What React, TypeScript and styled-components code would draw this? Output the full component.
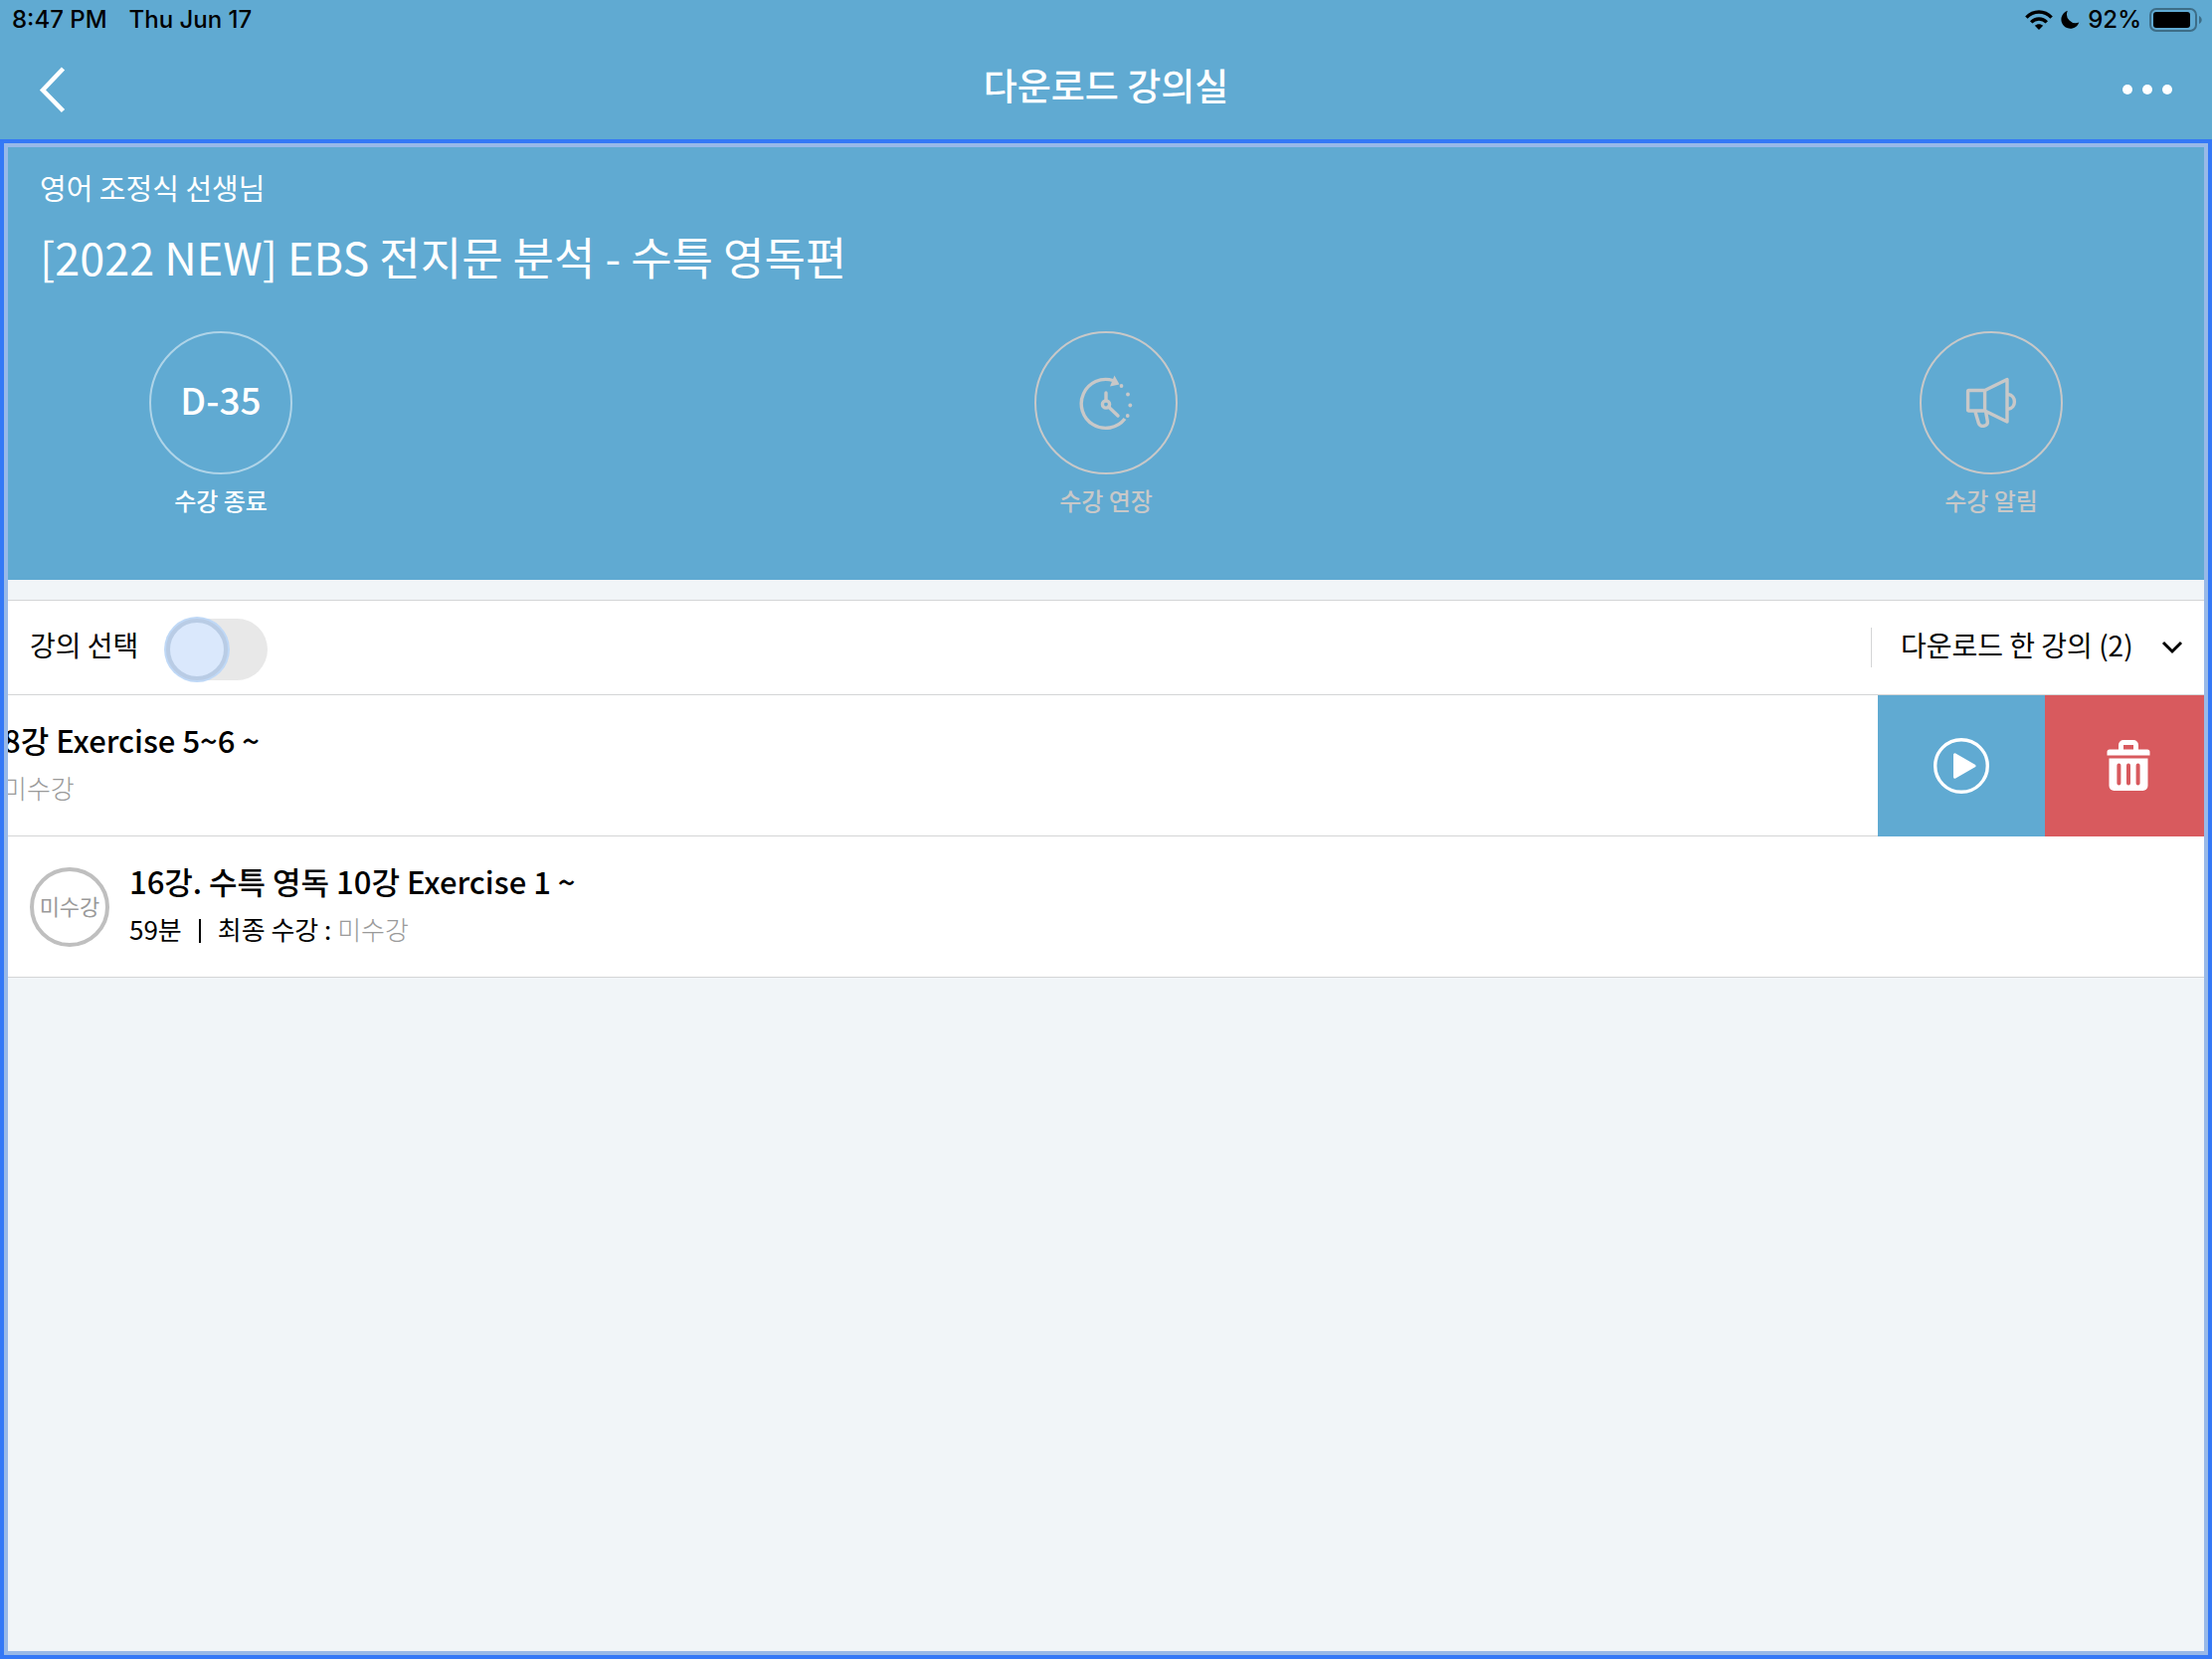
import React from 'react';
import styled, { createGlobalStyle } from 'styled-components';

const color = {
  sky: '#60aad2',
  focus: '#3478f6',
  focusSoft: '#98b9e8',
  page: '#f1f5f8',
  line: '#d4d5d6',
  muted: '#c8c8c8',
  grey: '#9a9a9a',
  danger: '#d85a5e',
};

const GlobalStyle = createGlobalStyle`
  *, *::before, *::after { box-sizing: border-box; }
  body {
    margin: 0;
    background: ${color.page};
    color: #000;
    font-family: "Noto Sans CJK KR", "Noto Sans", sans-serif;
  }
  button, select, input { font: inherit; color: inherit; margin: 0; }
  button { border: 0; padding: 0; background: none; cursor: pointer; }
  h1, h2, h3, p, ul { margin: 0; padding: 0; font-weight: 400; }
`;

const Page = styled.div`
  display: flex;
  flex-direction: column;
  min-height: 100vh;
`;

const TopArea = styled.header`
  background: ${color.sky};
`;

const StatusBar = styled.div`
  display: flex;
  justify-content: space-between;
  height: 40px;
  padding: 0 10px 0 12px;
  font: 500 24px/40px Inter, "Liberation Sans", sans-serif;
`;

const StatusGroup = styled.div<{ $gap: number }>`
  display: flex;
  align-items: center;
  gap: ${(p) => p.$gap}px;
`;

const NavBar = styled.nav`
  display: grid;
  grid-template-columns: 100px 1fr 100px;
  align-items: center;
  height: 100px;
  padding: 0 30px;
`;

const NavTitle = styled.h1`
  color: #fff;
  font-size: 37px;
  font-weight: 500;
  line-height: 52px;
  padding-bottom: 10px;
  text-align: center;
`;

const NavButton = styled.button<{ $end?: boolean }>`
  display: flex;
  align-items: center;
  justify-content: ${(p) => (p.$end ? 'flex-end' : 'flex-start')};
  height: 80px;
  padding: 0 10px;
`;

const FocusFrame = styled.main`
  flex: 1;
  display: flex;
  flex-direction: column;
  border: 4px solid ${color.focus};
`;

const FocusInner = styled.div`
  flex: 1;
  border: 4px solid ${color.focusSoft};
`;

const Hero = styled.section`
  padding: 16px 32px 62px;
  margin-bottom: 20px;
  background: ${color.sky};
  color: #fff;
`;

const Teacher = styled.p`
  font-size: 29px;
  line-height: 48px;
`;

const CourseTitle = styled.h2`
  margin-top: 12px;
  font-size: 45px;
  line-height: 68px;
`;

const Actions = styled.div`
  display: flex;
  justify-content: space-between;
  margin-top: 41px;
  padding: 0 110px;
`;

const Action = styled.button<{ $muted?: boolean }>`
  display: flex;
  flex-direction: column;
  align-items: center;
  gap: 8px;
  width: 144px;
  color: ${(p) => (p.$muted ? color.muted : '#fff')};
  font-size: 24px;
  font-weight: 500;
  line-height: 36px;
`;

const Ring = styled.span<{ $muted?: boolean }>`
  display: flex;
  align-items: center;
  justify-content: center;
  width: 144px;
  height: 144px;
  border: 2px solid ${(p) => (p.$muted ? color.muted : '#afd4e8')};
  border-radius: 50%;
`;

const DaysLeft = styled.span`
  padding-bottom: 8px;
  font-size: 37px;
  line-height: 52px;
`;

const Toolbar = styled.div`
  display: flex;
  align-items: center;
  justify-content: space-between;
  height: 96px;
  padding: 0 20px;
  background: #fff;
  border: solid ${color.line};
  border-width: 1px 0;
`;

const ToggleLabel = styled.label`
  display: flex;
  align-items: center;
  gap: 28px;
  padding-left: 2px;
  font-size: 28px;
  line-height: 48px;
`;

const LabelText = styled.span`
  padding-bottom: 6px;
`;

const Toggle = styled.input`
  appearance: none;
  display: flex;
  align-items: center;
  width: 102px;
  height: 62px;
  border-radius: 31px;
  background: #e8e8e8;
  cursor: pointer;

  &::before {
    content: '';
    width: 62px;
    height: 62px;
    flex: none;
    border: 4px solid #b9cce5;
    border-radius: 50%;
    background: #dae8fc;
    box-shadow: 0 0 0 2px #bfd8f6;
  }
  &:checked {
    justify-content: flex-end;
  }
`;

const ToggleSlot = styled.span`
  display: flex;
  padding-top: 4px;
`;

const FilterBox = styled.div`
  display: grid;
  grid-template-rows: 40px;
  align-items: center;
  border-left: 1px solid ${color.line};
`;

const Filter = styled.select`
  grid-area: 1 / 1;
  appearance: none;
  width: 314px;
  height: 40px;
  padding: 0 0 6px 29px;
  border: 0;
  background: none;
  font-size: 28px;
  line-height: 34px;
`;

const FilterArrow = styled.svg`
  grid-area: 1 / 1;
  justify-self: end;
  margin-right: 1px;
  pointer-events: none;
`;

const Lessons = styled.ul`
  list-style: none;
`;

const LessonRow = styled.li`
  display: flex;
  height: 142px;
  overflow: hidden;
  background: #fff;
`;

const LessonBody = styled.div<{ $swiped?: boolean }>`
  flex: 1;
  display: flex;
  align-items: center;
  gap: 20px;
  min-width: 0;
  margin-left: ${(p) => (p.$swiped ? -5 : 0)}px;
  padding: 0 22px 4px ${(p) => (p.$swiped ? 0 : 22)}px;
  border-bottom: 1px solid ${color.line};
  white-space: nowrap;
`;

const Badge = styled.span`
  display: flex;
  flex: none;
  align-items: center;
  justify-content: center;
  width: 80px;
  height: 80px;
  margin-top: 4px;
  padding-bottom: 4px;
  border: 4px solid #bfbfbf;
  border-radius: 50%;
  color: ${color.grey};
  font-size: 22px;
  line-height: 32px;
`;

const LessonTitle = styled.h3`
  font-size: 31px;
  font-weight: 500;
  line-height: 48px;
`;

const Meta = styled.p`
  font-size: 26px;
  line-height: 48px;
`;

const Bar = styled.span`
  display: inline-block;
  width: 2px;
  height: 24px;
  margin: 0 17px;
  background: #000;
  vertical-align: -3px;
`;

const Muted = styled.span`
  color: ${color.grey};
  font-weight: 300;
`;

const RowButton = styled.button<{ $danger?: boolean }>`
  display: flex;
  flex: none;
  align-items: center;
  justify-content: center;
  width: ${(p) => (p.$danger ? 160 : 168)}px;
  padding-left: ${(p) => (p.$danger ? 8 : 0)}px;
  background: ${(p) => (p.$danger ? color.danger : color.sky)};
`;

const WifiIcon = () => (
  <svg width="28" height="20" viewBox="0 0 28 20" aria-hidden="true">
    <g fill="none" stroke="#000" strokeWidth="3.4">
      <path d="M1.4 7.6C8.4 .2 19.6 .2 26.6 7.6" />
      <path d="M6.2 12.4c4.4-4.5 11.2-4.5 15.6 0" />
    </g>
    <path d="M14 20l-4.2-4.2c2.3-2.2 6.1-2.2 8.4 0z" />
  </svg>
);

const MoonIcon = () => (
  <svg width="19" height="20" viewBox="0 0 19 20" aria-hidden="true">
    <path d="M6.8.8A9.2 9.2 0 1 0 18.3 12.6 8.9 8.9 0 0 1 6.8.8z" />
  </svg>
);

const BatteryIcon = () => (
  <svg width="53" height="24" viewBox="0 0 53 24" aria-hidden="true">
    <rect x="1" y="1" width="46" height="22" rx="6" fill="none" stroke="#3d6d87" strokeWidth="2" />
    <rect x="4" y="4" width="37" height="16" rx="3" />
    <path d="M50 8c3.6 1.4 3.6 6.6 0 8z" fill="#3d6d87" />
  </svg>
);

const BackIcon = () => (
  <svg width="26" height="48" viewBox="0 0 26 48" fill="none" stroke="#fff" strokeWidth="4.5" aria-hidden="true">
    <path d="M23.5 3L3 24.5L23.5 45.5" />
  </svg>
);

const MoreIcon = () => (
  <svg width="50" height="10" viewBox="0 0 50 10" fill="#fff" aria-hidden="true">
    <circle cx="5" cy="5" r="5" />
    <circle cx="25" cy="5" r="5" />
    <circle cx="45" cy="5" r="5" />
  </svg>
);

const ClockIcon = () => (
  <svg width="54" height="58" viewBox="0 0 54 58" fill="none" stroke="currentColor" strokeWidth="3.4" aria-hidden="true">
    <path d="M46 45A24.5 24.5 0 1 1 34 6.5" />
    <path d="M35.500 1.5L40.500 10.500L31 12.500Z" fill="currentColor" stroke="none" />
    <circle cx="27" cy="30.500" r="3.600" />
    <path d="M27 27v-8M29.500 33l9.500 9" strokeLinecap="round" />
    <g fill="currentColor" stroke="none">
      <circle cx="42.500" cy="12" r="1.900" />
      <circle cx="49" cy="20.500" r="1.900" />
      <circle cx="51.300" cy="31.500" r="1.900" />
      <circle cx="48.700" cy="42" r="1.900" />
    </g>
  </svg>
);

const MegaphoneIcon = () => (
  <svg width="52" height="54" viewBox="0 0 52 54" fill="none" stroke="currentColor" strokeWidth="3.4" strokeLinejoin="round" aria-hidden="true">
    <rect x="2.600" y="14.500" width="17" height="20.500" rx="1" />
    <path d="M19.600 14.500L42 3.500v42.500L19.600 35" />
    <path d="M43 18.500c8.500 1.200 8.500 13.600 0 14.800" />
    <path d="M10 36l3.400 11.500c1.400 4.600 9.600 3.500 8.900-2L20.600 36" />
  </svg>
);

const PlayIcon = () => (
  <svg width="56" height="56" viewBox="0 0 56 56" aria-hidden="true">
    <circle cx="28" cy="28" r="26.300" fill="none" stroke="#fff" strokeWidth="3.400" />
    <path d="M21.500 16.800v22.400L41 28z" fill="#fff" stroke="#fff" strokeWidth="3" strokeLinejoin="round" />
  </svg>
);

const TrashIcon = () => (
  <svg width="44" height="52" viewBox="0 0 44 52" aria-hidden="true">
    <path d="M14.500 11V5a2.500 2.500 0 0 1 2.500-2.500h10A2.500 2.500 0 0 1 29.500 5v6" fill="none" stroke="#fff" strokeWidth="5" />
    <path d="M3 9.500h38a2.500 2.500 0 0 1 2.500 2.500v3.500H.5V12A2.500 2.500 0 0 1 3 9.500z" fill="#fff" />
    <path d="M2.500 18.500h39V46a5 5 0 0 1-5 5h-29a5 5 0 0 1-5-5z" fill="#fff" />
    <path d="M12.400 25.500v18M22 25.500v18M31.600 25.500v18" stroke={color.danger} strokeWidth="4" strokeLinecap="round" />
  </svg>
);

export default function App() {
  return (
    <Page>
      <GlobalStyle />
      <TopArea>
        <StatusBar>
          <StatusGroup $gap={22}>
            <span>8:47 PM</span>
            <span>Thu Jun 17</span>
          </StatusGroup>
          <StatusGroup $gap={8}>
            <WifiIcon />
            <MoonIcon />
            <span>92%</span>
            <BatteryIcon />
          </StatusGroup>
        </StatusBar>
        <NavBar>
          <NavButton type="button" aria-label="뒤로">
            <BackIcon />
          </NavButton>
          <NavTitle>다운로드 강의실</NavTitle>
          <NavButton type="button" $end aria-label="더보기">
            <MoreIcon />
          </NavButton>
        </NavBar>
      </TopArea>

      <FocusFrame>
        <FocusInner>
          <Hero>
            <Teacher>영어 조정식 선생님</Teacher>
            <CourseTitle>[2022 NEW] EBS 전지문 분석 - 수특 영독편</CourseTitle>
            <Actions>
              <Action type="button">
                <Ring>
                  <DaysLeft>D-35</DaysLeft>
                </Ring>
                수강 종료
              </Action>
              <Action type="button" $muted>
                <Ring $muted>
                  <ClockIcon />
                </Ring>
                수강 연장
              </Action>
              <Action type="button" $muted>
                <Ring $muted>
                  <MegaphoneIcon />
                </Ring>
                수강 알림
              </Action>
            </Actions>
          </Hero>

          <Toolbar>
            <ToggleLabel>
              <LabelText>강의 선택</LabelText>
              <ToggleSlot>
                <Toggle type="checkbox" role="switch" />
              </ToggleSlot>
            </ToggleLabel>
            <FilterBox>
              <Filter aria-label="강의 목록">
                <option>다운로드 한 강의 (2)</option>
              </Filter>
              <FilterArrow width="22" height="16" viewBox="0 0 22 16" aria-hidden="true">
                <path d="M2 3l9 9 9-9" fill="none" stroke="#000" strokeWidth="3" />
              </FilterArrow>
            </FilterBox>
          </Toolbar>

          <Lessons>
            <LessonRow>
              <LessonBody $swiped>
                <div>
                  <LessonTitle>8강 Exercise 5~6 ~</LessonTitle>
                  <Meta>
                    <Muted>미수강</Muted>
                  </Meta>
                </div>
              </LessonBody>
              <RowButton type="button" aria-label="재생">
                <PlayIcon />
              </RowButton>
              <RowButton type="button" $danger aria-label="삭제">
                <TrashIcon />
              </RowButton>
            </LessonRow>
            <LessonRow>
              <LessonBody>
                <Badge>미수강</Badge>
                <div>
                  <LessonTitle>16강. 수특 영독 10강 Exercise 1 ~</LessonTitle>
                  <Meta>
                    59분
                    <Bar />
                    최종 수강 : <Muted>미수강</Muted>
                  </Meta>
                </div>
              </LessonBody>
            </LessonRow>
          </Lessons>
        </FocusInner>
      </FocusFrame>
    </Page>
  );
}
